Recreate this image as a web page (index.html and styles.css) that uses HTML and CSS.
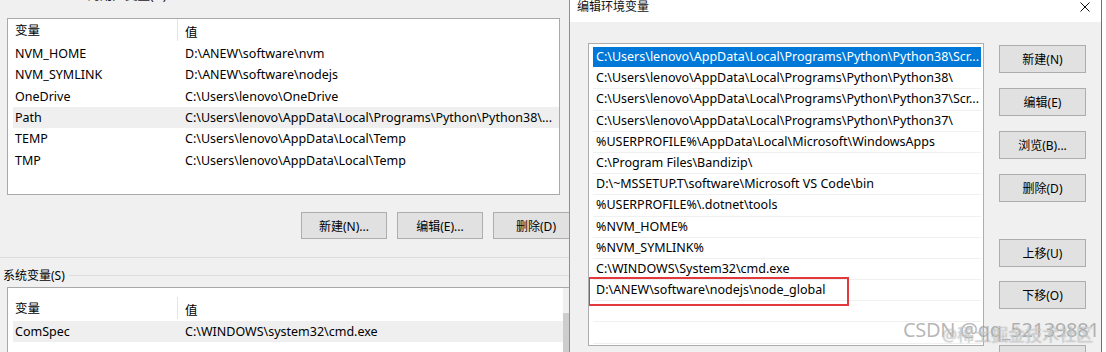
FILE: index.html
```html
<!DOCTYPE html>
<html lang="zh-CN">
<head>
<meta charset="utf-8">
<title>编辑环境变量</title>
<link rel="stylesheet" href="styles.css">
</head>
<body>
<div class="screen">
  <div class="bgwin">
    <div class="cut-label"><span>lenovo 的用户变量(U)</span></div>
    <div class="listbox user">
      <div class="lhead"><div class="hc1">变量</div><div class="hc2">值</div></div>
      <div class="lrow"><span>NVM_HOME</span><span>D:\ANEW\software\nvm</span></div>
      <div class="lrow"><span>NVM_SYMLINK</span><span>D:\ANEW\software\nodejs</span></div>
      <div class="lrow"><span>OneDrive</span><span>C:\Users\lenovo\OneDrive</span></div>
      <div class="lrow hl"><span>Path</span><span>C:\Users\lenovo\AppData\Local\Programs\Python\Python38\...</span></div>
      <div class="lrow"><span>TEMP</span><span>C:\Users\lenovo\AppData\Local\Temp</span></div>
      <div class="lrow"><span>TMP</span><span>C:\Users\lenovo\AppData\Local\Temp</span></div>
    </div>
    <div class="btnrow">
      <div class="btn">新建(N)...</div>
      <div class="btn">编辑(E)...</div>
      <div class="btn">删除(D)</div>
    </div>
    <div class="sep"></div>
    <div class="group"><span>系统变量(S)</span><div class="gline"></div></div>
    <div class="listbox sys">
      <div class="sysmain">
        <div class="lhead"><div class="hc1">变量</div><div class="hc2">值</div></div>
        <div class="lrow hl"><span>ComSpec</span><span>C:\WINDOWS\system32\cmd.exe</span></div>
      </div>
      <div class="vscroll"><div class="arrow"></div><div class="thumb"></div></div>
    </div>
  </div>

  <div class="dlg">
    <div class="titlebar">
      <span class="title">编辑环境变量</span>
      <svg class="close" width="10" height="10" viewBox="0 0 10 10"><path d="M0.5 0.5 L9.5 9.5 M9.5 0.5 L0.5 9.5" stroke="#111" stroke-width="1" fill="none"/></svg>
    </div>
    <div class="dbody">
      <div class="plist">
        <div class="prow sel">C:\Users\lenovo\AppData\Local\Programs\Python\Python38\Scr...</div>
        <div class="prow">C:\Users\lenovo\AppData\Local\Programs\Python\Python38\</div>
        <div class="prow">C:\Users\lenovo\AppData\Local\Programs\Python\Python37\Scr...</div>
        <div class="prow">C:\Users\lenovo\AppData\Local\Programs\Python\Python37\</div>
        <div class="prow">%USERPROFILE%\AppData\Local\Microsoft\WindowsApps</div>
        <div class="prow">C:\Program Files\Bandizip\</div>
        <div class="prow">D:\~MSSETUP.T\software\Microsoft VS Code\bin</div>
        <div class="prow">%USERPROFILE%\.dotnet\tools</div>
        <div class="prow">%NVM_HOME%</div>
        <div class="prow">%NVM_SYMLINK%</div>
        <div class="prow">C:\WINDOWS\System32\cmd.exe</div>
        <div class="prow mark">D:\ANEW\software\nodejs\node_global<span class="redbox"></span></div>
        <div class="prow"></div>
        <div class="prow"></div>
        <div class="prow"></div>
      </div>
      <div class="bcol">
        <div class="btn rb">新建(N)</div>
        <div class="btn rb">编辑(E)</div>
        <div class="btn rb">浏览(B)...</div>
        <div class="btn rb">删除(D)</div>
        <div class="btn rb gap-big">上移(U)</div>
        <div class="btn rb gap-sm">下移(O)</div>
        <div class="btn rb gap-last">编辑文本(T)...</div>
      </div>
    </div>
  </div>

  <div class="wm1">CSDN @qq_52139881</div>
  <div class="wm2">@稀土掘金技术社区</div>
</div>
</body>
</html>
```

FILE: styles.css
```css
* { box-sizing: border-box; }
html, body { margin: 0; padding: 0; }
body {
  width: 1106px;
  height: 352px;
  overflow: hidden;
  background: #ffffff;
  font-family: "Noto Sans", "Noto Sans CJK SC", sans-serif;
  font-size: 12.5px;
  color: #000;
}
.screen {
  position: relative;
  display: flex;
  width: 1106px;
  height: 352px;
  overflow: hidden;
}

/* ---------- background window ---------- */
.bgwin {
  width: 569px;
  flex: none;
  background: #f0f0f0;
  overflow: hidden;
  display: flex;
  flex-direction: column;
}
.cut-label {
  height: 18px;
  padding-left: 45px;
  overflow: hidden;
}
.cut-label span {
  display: block;
  margin-top: -11px;
  line-height: 14px;
  white-space: nowrap;
  color: #222;
}
.listbox {
  background: #fff;
  border: 1px solid #a9a9a9;
  overflow: hidden;
  white-space: nowrap;
}
.listbox.user {
  margin-left: 7px;
  width: 553px;
  height: 177px;
  padding-left: 5px;
}
.lhead {
  display: grid;
  grid-template-columns: 170px 1fr;
  height: 24px;
  align-items: center;
  margin-left: -5px;
}
.hc1 {
  padding-left: 7px;
  line-height: 24px;
  border-right: 1px solid #e5e5e5;
  align-self: end;
  margin-bottom: 2px;
  height: 22px;
}
.hc2 { padding-left: 7px; }
.lrow {
  display: grid;
  grid-template-columns: 170px 1fr;
  height: 21.33px;
  line-height: 21.33px;
  padding-left: 2px;
}
.lrow.hl { background: #efefef; }

.btnrow {
  display: flex;
  gap: 10px;
  padding-left: 301px;
  margin-top: 17px;
}
.btn {
  flex: none;
  width: 86px;
  height: 27px;
  background: #e1e1e1;
  border: 1px solid #adadad;
  display: flex;
  align-items: center;
  justify-content: center;
  white-space: nowrap;
  font-size: 12px;
}
.sep {
  margin-top: 18px;
  height: 1px;
  background: #dcdcdc;
}
.group {
  display: flex;
  align-items: center;
  height: 18px;
  margin-top: 8px;
  padding-left: 3px;
  gap: 4px;
}
.group span { white-space: nowrap; font-size: 12px; }
.gline { flex: 1; height: 1px; background: #dcdcdc; }

.listbox.sys {
  margin-top: 3px;
  margin-left: 7px;
  width: 562px;
  flex: 1;
  display: flex;
  border-right: none;
  border-bottom: none;
}
.sysmain {
  flex: 1;
  padding-top: 9px;
  padding-left: 5px;
}
.vscroll {
  width: 6px;
  flex: none;
  background: #f0f0f0;
  display: flex;
  flex-direction: column;
}
.arrow { height: 25px; }
.thumb { flex: 1; background: #cdcdcd; }

/* ---------- front dialog ---------- */
.dlg {
  width: 533px;
  flex: none;
  background: #f0f0f0;
  border-left: 1px solid #8f8f8f;
  border-right: 1px solid #707070;
  display: flex;
  flex-direction: column;
  overflow: hidden;
}
.titlebar {
  height: 22px;
  flex: none;
  background: #fff;
  display: flex;
  justify-content: space-between;
  align-items: flex-start;
  padding-left: 7px;
  padding-right: 11px;
}
.title {
  line-height: 14px;
  color: #111;
  font-size: 12px;
}
.close { margin-top: 2px; }
.dbody {
  display: flex;
  padding-top: 21px;
  padding-left: 18px;
  flex: 1;
  min-height: 0;
}
.plist {
  width: 396px;
  height: 303px;
  flex: none;
  background: #fff;
  border: 1px solid #adadad;
  padding: 3px 2px 0 4px;
  overflow: hidden;
}
.prow {
  position: relative;
  height: 21.2px;
  line-height: 20px;
  padding-left: 3px;
  border-bottom: 1px solid #f0f0f0;
  white-space: nowrap;
}
.prow.sel {
  background: #0078d7;
  color: #fff;
  border-bottom-color: #fff;
}
.redbox {
  position: absolute;
  left: -5px;
  top: -3px;
  width: 261px;
  height: 29px;
  border: 2px solid #e4393c;
}
.bcol {
  display: flex;
  flex-direction: column;
  margin-left: 15px;
  padding-top: 2px;
}
.btn.rb {
  width: 87px;
  height: 28px;
  margin-bottom: 15px;
}
.btn.rb.gap-big { margin-top: 22px; }
.btn.rb.gap-sm { margin-top: -1px; }
.btn.rb.gap-last { margin-top: 21px; }

/* ---------- watermark ---------- */
.wm1 {
  position: absolute;
  left: 903px;
  top: 318px;
  font-size: 20px;
  line-height: 24px;
  color: rgba(110, 110, 110, 0.5);
  white-space: nowrap;
  letter-spacing: -0.3px;
}
.wm2 {
  position: absolute;
  left: 942px;
  top: 325px;
  font-size: 17px;
  line-height: 20px;
  color: rgba(255, 255, 255, 0.5);
  text-shadow: 0 0 1px rgba(110, 110, 110, 0.7);
  white-space: nowrap;
}
```
